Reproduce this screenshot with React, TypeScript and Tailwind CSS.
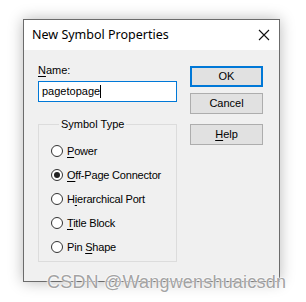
import { ReactNode } from "react";

const font = { fontFamily: '"Liberation Sans", Arial, sans-serif' };

function U({ children }: { children: ReactNode }) {
  return <span className="underline underline-offset-[2px] decoration-1">{children}</span>;
}

function Radio({ checked, children }: { checked?: boolean; children: ReactNode }) {
  return (
    <div className="flex items-center h-[24px]">
      <span className="w-[12px] h-[12px] rounded-full border border-[#333] bg-white flex items-center justify-center shrink-0">
        {checked && <span className="w-[6px] h-[6px] rounded-full bg-[#222]" />}
      </span>
      <span className="ml-[4px] text-[11px] text-black leading-none tracking-[-0.2px]">{children}</span>
    </div>
  );
}

function Btn({ children, primary }: { children: ReactNode; primary?: boolean }) {
  return (
    <div
      className={`w-[73px] h-[21px] bg-[#e1e1e1] flex items-center justify-center text-[11px] text-black ${
        primary ? "border-2 border-[#0078d7]" : "border border-[#adadad]"
      }`}
    >
      {children}
    </div>
  );
}

export default function App() {
  return (
    <div className="w-[306px] h-[302px] bg-white relative overflow-hidden" style={font}>
      {/* Dialog */}
      <div className="ml-[23px] mt-[19px] w-[257px] h-[263px] border border-[#6b6b6b] bg-[#f0f0f0] flex flex-col shadow-[0_0_14px_rgba(0,0,0,0.28)]">
        {/* Title bar */}
        <div className="h-[30px] bg-white flex items-center justify-between pl-[8px] pr-[8px] shrink-0">
          <span
            className="text-[12.5px] text-black"
            style={{ fontFamily: '"Noto Sans", "Open Sans", sans-serif' }}
          >
            New Symbol Properties
          </span>
          <svg width="12" height="12" viewBox="0 0 12 12" className="mr-[1px]">
            <path d="M1 1 L11 11 M11 1 L1 11" stroke="#111" strokeWidth="1.1" />
          </svg>
        </div>

        {/* Body */}
        <div className="flex pl-[14px] pt-[13px]">
          <div className="w-[139px] flex flex-col">
            <div className="text-[11px] text-black leading-[14px] h-[14px]">
              <U>N</U>ame:
            </div>
            <div className="mt-[4px] h-[21px] border border-[#0078d7] bg-white flex items-center px-[3px] text-[11px] text-black">
              pagetopage<span className="w-px h-[13px] bg-black" />
            </div>
            <fieldset className="mt-[16px] h-[144px] border border-[#dcdcdc] pl-[12px] pt-[8px]">
              <legend className="ml-[8px] px-[2px] text-[11px] text-black leading-[13px]">Symbol Type</legend>
              <Radio>
                <U>P</U>ower
              </Radio>
              <Radio checked>
                <U>O</U>ff-Page Connector
              </Radio>
              <Radio>
                H<U>i</U>erarchical Port
              </Radio>
              <Radio>
                <U>T</U>itle Block
              </Radio>
              <Radio>
                Pin <U>S</U>hape
              </Radio>
            </fieldset>
          </div>
          <div className="ml-[13px] pt-[3px] flex flex-col">
            <Btn primary>OK</Btn>
            <div className="mt-[6px]">
              <Btn>Cancel</Btn>
            </div>
            <div className="mt-[10px]">
              <Btn>
                <span>
                  <U>H</U>elp
                </span>
              </Btn>
            </div>
          </div>
        </div>
      </div>

      {/* Watermark */}
      <div
        className="absolute left-[47px] top-[269px] text-[18px] text-[#a3a3a3] tracking-[0.2px]"
        style={{ textShadow: "0 0 2px #fff, 0 0 2px #fff, 0 0 1px #fff" }}
      >
        CSDN @Wangwenshuaicsdn
      </div>
    </div>
  );
}
